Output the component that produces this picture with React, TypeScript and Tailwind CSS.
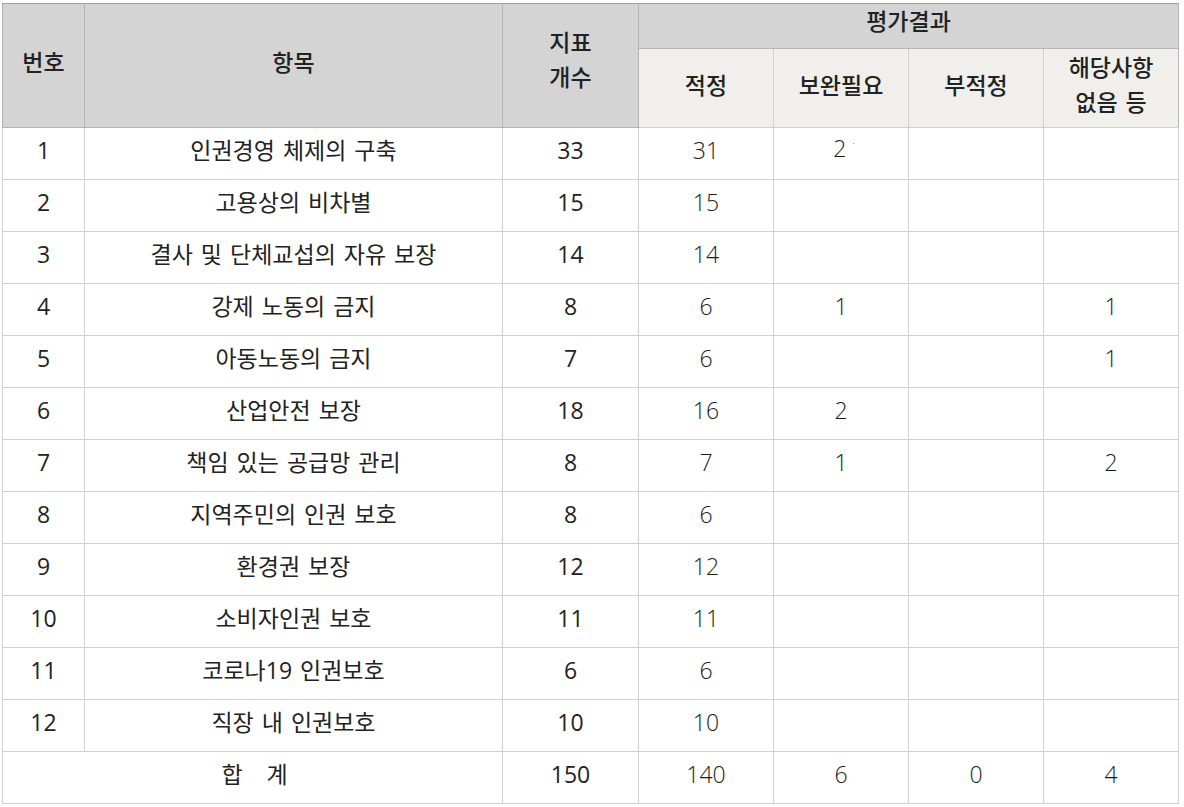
import React from "react";

const rows: [string, string, string, string, string, string, string][] = [
  ["1", "인권경영 체제의 구축", "33", "31", "2", "", ""],
  ["2", "고용상의 비차별", "15", "15", "", "", ""],
  ["3", "결사 및 단체교섭의 자유 보장", "14", "14", "", "", ""],
  ["4", "강제 노동의 금지", "8", "6", "1", "", "1"],
  ["5", "아동노동의 금지", "7", "6", "", "", "1"],
  ["6", "산업안전 보장", "18", "16", "2", "", ""],
  ["7", "책임 있는 공급망 관리", "8", "7", "1", "", "2"],
  ["8", "지역주민의 인권 보호", "8", "6", "", "", ""],
  ["9", "환경권 보장", "12", "12", "", "", ""],
  ["10", "소비자인권 보호", "11", "11", "", "", ""],
  ["11", "코로나19 인권보호", "6", "6", "", "", ""],
  ["12", "직장 내 인권보호", "10", "10", "", "", ""],
];

const font = { fontFamily: '"Open Sans", "Noto Sans CJK KR", sans-serif' };

export default function App() {
  const td = "border border-[#d0d0d0] text-center align-middle p-0 pb-[6px]";
  const light = "font-light text-[#1a1a1a]";
  return (
    <div className="bg-white w-[1184px] h-[807px] pt-[3px] pl-[2px]" style={font}>
      <table className="table-fixed border-collapse text-[23px] text-[#222] leading-[35px] [word-spacing:2px]">
        <colgroup>
          <col className="w-[82px]" />
          <col className="w-[418px]" />
          <col className="w-[136px]" />
          <col className="w-[135px]" />
          <col className="w-[135px]" />
          <col className="w-[135px]" />
          <col className="w-[135px]" />
        </colgroup>
        <thead>
          <tr className="h-[45px]">
            <th rowSpan={2} className="border border-[#b4b4b4] border-t-[#a0a0a0] bg-[#d4d4d4] font-medium text-center pb-[6px]">번호</th>
            <th rowSpan={2} className="border border-[#b4b4b4] border-t-[#a0a0a0] bg-[#d4d4d4] font-medium text-center pb-[6px]">항목</th>
            <th rowSpan={2} className="border border-[#b4b4b4] border-t-[#a0a0a0] bg-[#d4d4d4] font-medium text-center">
              <div className="pb-[12px]">지표<br />개수</div>
            </th>
            <th colSpan={4} className="border border-[#b4b4b4] border-t-[#a0a0a0] bg-[#d4d4d4] font-medium text-center">
              <div className="-mt-[9px]">평가결과</div>
            </th>
          </tr>
          <tr className="h-[79px]">
            <th className="border border-[#d0d0d0] border-t-[#c4c4c4] bg-[#f0efeb] font-medium pb-[6px]">적정</th>
            <th className="border border-[#d0d0d0] border-t-[#c4c4c4] bg-[#f0efeb] font-medium pb-[6px]">보완필요</th>
            <th className="border border-[#d0d0d0] border-t-[#c4c4c4] bg-[#f0efeb] font-medium pb-[6px]">부적정</th>
            <th className="border border-[#d0d0d0] border-t-[#c4c4c4] border-r-[#b4b4b4] bg-[#f0efeb] font-medium pb-[6px]">
              해당사항<br />없음 등
            </th>
          </tr>
        </thead>
        <tbody>
          {rows.map((r, i) => (
            <tr key={i} className="h-[52px]">
              <td className={td}>{r[0]}</td>
              <td className={td}>{r[1]}</td>
              <td className={td}>{r[2]}</td>
              <td className={`${td} ${light}`}>{r[3]}</td>
              <td className={`${td} ${light}`}>
                {r[4]}
                {i === 0 && <span className="relative -top-[10px] left-[6px] text-[10px]">·</span>}
              </td>
              <td className={`${td} ${light}`}>{r[5]}</td>
              <td className={`${td} ${light}`}>{r[6]}</td>
            </tr>
          ))}
          <tr className="h-[52px]">
            <td colSpan={2} className={td}>
              <span className="pl-[4px]">합&nbsp;&nbsp;&nbsp;계</span>
            </td>
            <td className={td}>150</td>
            <td className={`${td} ${light}`}>140</td>
            <td className={`${td} ${light}`}>6</td>
            <td className={`${td} ${light}`}>0</td>
            <td className={`${td} ${light}`}>4</td>
          </tr>
        </tbody>
      </table>
    </div>
  );
}
